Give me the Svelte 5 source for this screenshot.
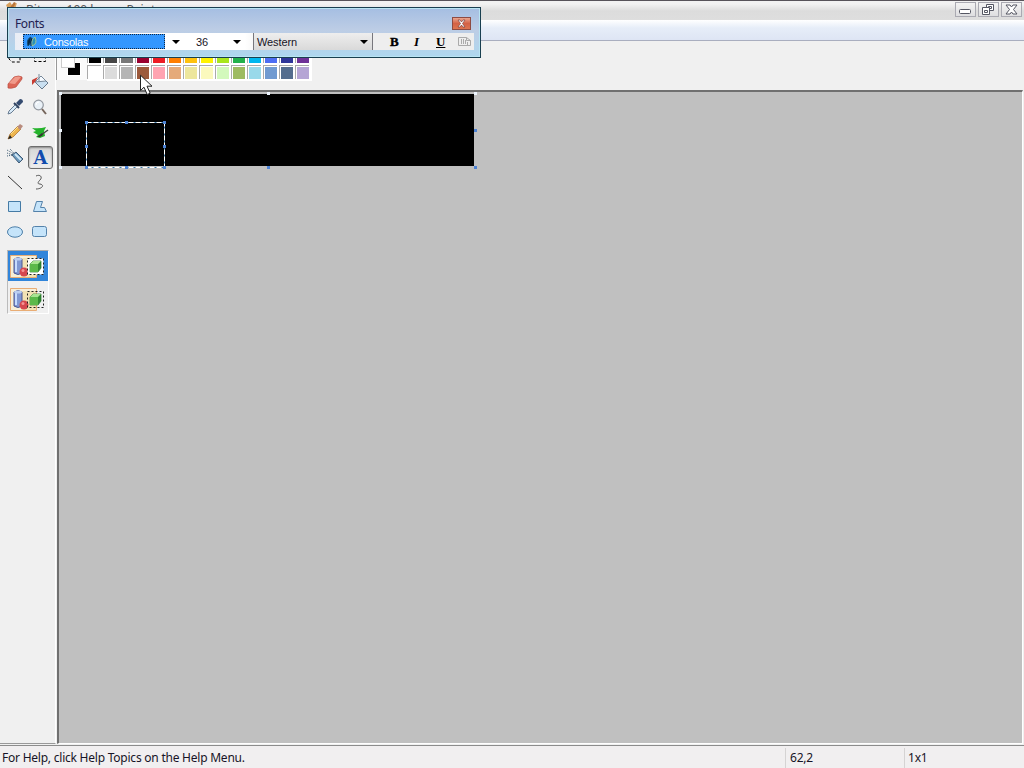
<script>
  const colors = [
    ["#000000", "#464646", "#787878", "#990030", "#ed1c24", "#ff7e00", "#ffc20e", "#fff200", "#a8e61d", "#22b14c", "#00b7ef", "#4d6df3", "#2f3699", "#6f3198"],
    ["#ffffff", "#dcdcdc", "#b4b4b4", "#9c5a3c", "#ffa3b1", "#e5aa7a", "#ede69c", "#fbf9bd", "#d3f9bc", "#9dbb61", "#99d9ea", "#709ad1", "#546d8e", "#b5a5d5"],
  ];

  const tools = [
    "freeSelect",
    "select",
    "eraser",
    "fill",
    "picker",
    "magnifier",
    "pencil",
    "brush",
    "airbrush",
    "text",
    "line",
    "curve",
    "rectangle",
    "polygon",
    "ellipse",
    "rounded",
  ];

  const canvasHandles = [
    [0, 0],
    [208, 0],
    [415, 0],
    [0, 37],
    [415, 37],
    [0, 74],
    [208, 74],
    [415, 74],
  ];
  const textHandles = [
    [0, 0],
    [40, 0],
    [78, 0],
    [0, 24],
    [78, 24],
    [0, 45],
    [40, 45],
    [78, 45],
  ];

  let activeTool = "text";
  let opaque = true;
</script>

<div class="window">
  <header class="titlebar">
    <svg class="app-icon" width="16" height="16" viewBox="0 0 16 16">
      <path d="M2 4l4-3 2 3 5-2-2 6-6 2z" fill="#d9a05d" />
      <path d="M5 8l5-7 2 1-5 8z" fill="#b87539" />
    </svg>
    <span class="title">Bitmap100.bmp - Paint</span>
    <div class="controls">
      <button aria-label="Minimize">
        <svg width="18" height="13" viewBox="0 0 18 13">
          <rect x="3.5" y="6.5" width="11" height="4" rx="1" fill="#fff" stroke="#555763" />
        </svg>
      </button>
      <button aria-label="Restore">
        <svg width="18" height="13" viewBox="0 0 18 13" fill="#fff" stroke="#555763">
          <path d="M7.5 1.5h7v6h-7z" />
          <path d="M9.5 3.5h3v2h-3z" />
          <path d="M3.5 4.5h7v7h-7z" />
          <path d="M5.5 7.5h3v2h-3z" />
        </svg>
      </button>
      <button aria-label="Close">
        <svg width="18" height="13" viewBox="0 0 18 13">
          <path d="M4 2h4l1.5 2L11 2h4l-3.500 4.500L15 11h-4L9.500 9 8 11H4l3.500-4.500z" fill="#fff" stroke="#555763" />
        </svg>
      </button>
    </div>
  </header>
  <nav class="menubar"></nav>

  <div class="main">
    <aside class="toolbox">
      <div class="tools">
        {#each tools as tool}
          <button class="tool" class:active={tool === activeTool} aria-label={tool}>
            {#if tool === "text"}
              <span class="letter">A</span>
            {:else}
              <svg width="18" height="18" viewBox="0 0 18 18" fill="none">
                {#if tool === "freeSelect"}
                  <path d="M3 5v6l3 3h8V5" stroke="#000" stroke-dasharray="3 2" />
                {:else if tool === "select"}
                  <path d="M3.500 3.500h11v10h-11z" stroke="#000" stroke-dasharray="3 2" />
                {:else if tool === "eraser"}
                  <path d="M2 11l6-7q5-2 8 0v2l-6 8q-5 2-8 1z" fill="#dc6656" stroke="#b74c40" stroke-width=".7" />
                  <path d="M3 10l6-6q4-1 6 0l-6 7q-3 0-6-1z" fill="#f09a8a" />
                {:else if tool === "fill"}
                  <path d="M4 9l6-6 7 7-6 6z" fill="#c9dff0" stroke="#66798b" />
                  <path d="M8 1v7M4 9l6-6 5 5z" fill="#f5faff" stroke="#78899a" />
                  <path d="M1 12V7l6-3-3 5z" fill="#c83d32" />
                {:else if tool === "picker"}
                  <path d="M10 5l4-4q3 0 3 3l-4 4z" fill="#344b70" />
                  <path d="M8 5l5 5" stroke="#2d405f" stroke-width="2" />
                  <path d="M9 7l2 2-6 6-3 1 1-3z" fill="#d8eaf8" stroke="#697d92" />
                {:else if tool === "magnifier"}
                  <circle cx="7.500" cy="7" r="4.800" fill="#eaf1f7" stroke="#9298a0" stroke-width="1.200" />
                  <path d="M11 11l4 5" stroke="#75655b" stroke-width="2" />
                  <path d="M5 7q0-3 3-3" stroke="#fff" />
                {:else if tool === "pencil"}
                  <path d="M2 16l2-5 8-8 3 3-8 8z" fill="#edb54e" stroke="#a96c27" stroke-width=".7" />
                  <path d="M11 4l3-3 3 2-3 4z" fill="#b98c7e" />
                  <path d="M2 16l2-4 2 3z" fill="#252525" />
                  <path d="M5 11l7-7" stroke="#ffe28b" />
                {:else if tool === "brush"}
                  <path d="M1 5q8 1 14-1l-2 4 1 5-5 2-4-1 2-2-5-3 3-1z" fill="#24b32b" />
                  <path d="M10 12l7-5" stroke="#464a45" stroke-width="1.500" />
                  <path d="M6 14l5-4 1 2-3 2z" fill="#343a30" />
                {:else if tool === "airbrush"}
                  <path d="M6 7l4-3 7 7-4 4z" fill="#6c9abe" stroke="#415b76" />
                  <path d="M9 6l6 6" stroke="#d1e7f5" stroke-width="2" />
                  <path d="M1 2l7 4M1 5l6 2M1 8l6-1M4 1l4 4" stroke="#405d74" stroke-dasharray="1 1" />
                {:else if tool === "line"}
                  <path d="M2 3l14 13" stroke="#353535" />
                {:else if tool === "curve"}
                  <path d="M5 3c4-2 7 1 4 4-2 2-3 4 0 4 5 1 2 5-4 5" stroke="#555" />
                {:else if tool === "rectangle"}
                  <path d="M2.500 3.500h12v10h-12z" fill="#c5e4fa" stroke="#457ba5" />
                {:else if tool === "polygon"}
                  <path d="M2.500 13.500l3-10h6l-2 6h4l2 4z" fill="#c5e4fa" stroke="#5482aa" />
                {:else if tool === "ellipse"}
                  <ellipse cx="9" cy="9" rx="7.500" ry="5.200" fill="#c5e4fa" stroke="#4d7fa8" />
                {:else}
                  <rect x="1.500" y="3.500" width="14" height="10" rx="2" fill="#c5e4fa" stroke="#5482aa" />
                {/if}
              </svg>
            {/if}
          </button>
        {/each}
      </div>
      <div class="modes">
        {#each [true, false] as mode}
          <button class="mode" class:chosen={opaque === mode} aria-label={mode ? "Opaque" : "Transparent"}>
            <svg width="36" height="26" viewBox="0 0 36 26">
              <path d="M1.500 1.500h26v22h-26z" fill="#f7efd8" stroke="#e9ad75" />
              <path d="M12 4h15v19H12z" fill="#f1e2b4" />
              <path d="M5 5q4-3 8 0v14q-4 3-8 0z" fill="#8098d3" stroke="#4c5792" />
              <path d="M7 6v12" stroke="#c7dcff" stroke-width="2" />
              <ellipse cx="9" cy="5" rx="4" ry="1.500" fill="#b9cdf1" />
              <circle cx="15" cy="18" r="4.500" fill="#d5474f" />
              <circle cx="14" cy="16.500" r="1.500" fill="#f49395" />
              <path d="M18.500 4.500h16v16h-16z" fill={mode ? "#fff" : "none"} stroke="#222" stroke-dasharray="2 2" />
              <path d="M21 10l3-3h8v7l-3 4h-8z" fill="#328b32" stroke="#247029" stroke-width=".7" />
              <path d="M21 10l3-3h8l-3 3z" fill="#a8e491" />
              <path d="M21 10h8v8h-8z" fill="#5bb94a" />
            </svg>
          </button>
        {/each}
      </div>
    </aside>

    <div class="workspace">
      <div class="colorbar">
        <div class="current">
          <span class="background-color"></span>
          <span class="foreground-color"></span>
        </div>
        <div class="palette">
          {#each colors as row}
            {#each row as color}
              <span class="swatch" style="background-color: {color}"></span>
            {/each}
          {/each}
        </div>
      </div>
      <div class="viewport">
        <div class="bitmap"></div>
        {#each canvasHandles as [x, y], i}
          <i class="handle" class:pale={i < 4 || i === 5} style="left: {x}px; top: {y}px"></i>
        {/each}
        <div class="text-selection">
          <svg width="80" height="47" viewBox="0 0 80 47" fill="none">
            <path d="M.500 .500h78v45H.500z" stroke="#3977a6" />
            <path d="M.500 .500h78v45H.500z" stroke="#fff" stroke-dasharray="5 2" />
          </svg>
          {#each textHandles as [x, y]}
            <i class="handle" style="left: {x - 1}px; top: {y - 1}px"></i>
          {/each}
        </div>
      </div>
    </div>
  </div>

  <footer class="statusbar">
    <span class="help">For Help, click Help Topics on the Help Menu.</span>
    <span class="position">62,2</span>
    <span class="size">1x1</span>
  </footer>

  <section class="fonts">
    <div class="fonts-title">
      <span>Fonts</span>
      <button class="fonts-close" aria-label="Close fonts">
        <svg width="9" height="9" viewBox="0 0 9 9">
          <path d="M1 1h2l1.500 2L6 1h2L5.500 4.500 8 8H6L4.500 6 3 8H1l2.500-3.500z" fill="#fff" stroke="#633" stroke-width=".6" />
        </svg>
      </button>
    </div>
    <div class="fonts-row">
      <div class="family">
        <svg width="12" height="12" viewBox="0 0 12 12" fill="none">
          <path d="M5 1Q0 3 2 10Q5 8 5 1z" fill="#082743" stroke="#164d70" />
          <path d="M9 1Q5 3 6 10Q12 8 9 1z" fill="#288fb9" stroke="#a7c98d" />
          <path d="M6 2Q4 6 5 10" stroke="#08223c" />
        </svg>
        <span>Consolas</span>
      </div>
      <span class="arrow family-arrow"></span>
      <span class="font-size">36</span>
      <span class="arrow size-arrow"></span>
      <div class="charset">
        <span>Western</span>
        <span class="arrow"></span>
      </div>
      <div class="format">
        <b>B</b>
        <em>I</em>
        <u>U</u>
        <svg width="14" height="12" viewBox="0 0 14 12" fill="none" stroke="#aaa">
          <path d="M.500 1.500h8l4 3v5H.500zM8.500 1.500v3h4M3.500 3v5M5.500 3v5M7.500 4v4M9.500 6v3" />
        </svg>
      </div>
    </div>
  </section>

  <svg class="cursor" width="13" height="22" viewBox="0 0 13 22">
    <path d="M.500 1.200v15.300l3.500-3.300 3.200 7.300 3-1.300-3.200-7h5z" fill="#fff" stroke="#222" />
  </svg>
</div>

<style>
  :global(body) {
    margin: 0;
  }
  .window {
    position: relative;
    width: 1024px;
    height: 768px;
    overflow: hidden;
    display: flex;
    flex-direction: column;
    background: #f0f0f0;
    color: #171426;
    font-family: "Noto Sans", sans-serif;
    font-size: 12px;
  }
  button {
    box-sizing: border-box;
    margin: 0;
    padding: 0;
    border: 0;
    background: none;
  }
  svg {
    display: block;
    flex: none;
  }
  .titlebar {
    height: 20px;
    flex: none;
    box-sizing: border-box;
    border-top: 1px solid #57535a;
    display: flex;
    background: linear-gradient(#f2f2f2 0 3px, #dcdcdc 10px, #dedede);
  }
  .app-icon {
    margin-left: 4px;
  }
  .title {
    height: 7px;
    overflow: hidden;
    margin-left: 6px;
    line-height: 17px;
    color: #555;
  }
  .controls {
    display: flex;
    gap: 2px;
    margin: 1px 2px 0 auto;
  }
  .controls button {
    width: 21px;
    height: 15px;
    border: 1px solid #aaaab2;
    background: linear-gradient(#f3f3f3, #dedee0);
  }
  .menubar {
    height: 21px;
    flex: none;
    box-sizing: border-box;
    border-bottom: 1px solid #a9aebf;
    background: linear-gradient(#fff, #e6edf8 8px, #dee5f4);
  }
  .main {
    height: 703px;
    flex: none;
    display: flex;
  }
  .toolbox {
    width: 56px;
    box-sizing: border-box;
    padding: 3px 3px 0 2px;
    border-right: 1px solid #fff;
    border-bottom: 1px solid #999;
  }
  .tools {
    display: grid;
    grid-template-columns: 25px 25px;
    grid-auto-rows: 25px;
  }
  .tool {
    display: flex;
    align-items: center;
    justify-content: center;
  }
  .tool.active {
    height: 23px;
    margin: 2px -1px 0 1px;
    border: 1px solid #6d6d6d;
    border-radius: 3px;
    background: linear-gradient(#d6d6d6, #eee);
    box-shadow: inset 0 1px 2px #888;
  }
  .letter {
    color: #124cae;
    font: bold 18px/21px "DejaVu Serif", serif;
  }
  .modes {
    width: 40px;
    height: 62px;
    margin: 6px 0 0 5px;
    display: flex;
    flex-direction: column;
    gap: 3px;
    border-top: 1px solid #aaa;
    border-left: 1px solid #bbb;
    border-right: 1px solid #fff;
    border-bottom: 1px solid #fff;
  }
  .mode {
    flex: none;
    width: 40px;
    height: 30px;
    padding: 3px 1px 1px;
  }
  .chosen {
    background: #3185da;
  }
  .workspace {
    flex: 1;
    display: flex;
    flex-direction: column;
    margin-right: 1px;
  }
  .colorbar {
    height: 49px;
    flex: none;
    display: flex;
    align-items: flex-start;
  }
  .current {
    width: 31px;
    height: 39px;
    box-sizing: border-box;
    position: relative;
    border-left: 1px solid #999;
    background: #fafafa;
  }
  .background-color,
  .foreground-color {
    position: absolute;
    width: 12px;
    height: 12px;
  }
  .background-color {
    left: 10px;
    top: 21px;
    background: #000;
    border: 1px solid #fff;
  }
  .foreground-color {
    left: 4px;
    top: 13px;
    background: #fff;
    border: 1px solid #ccc;
  }
  .palette {
    padding: 9px 0 0 1px;
    height: 31px;
    display: grid;
    grid-template-columns: repeat(14, 16px);
    grid-template-rows: 16px 16px;
    background: #fff;
  }
  .swatch {
    width: 12px;
    height: 12px;
    margin: 1px;
    outline: 1px solid #fff;
    box-shadow: -1px -1px 0 1px #aaa;
  }
  .viewport {
    position: relative;
    flex: 1;
    box-sizing: border-box;
    margin-left: 1px;
    padding: 2px 0 0 2px;
    border: 1px solid #858585;
    border-top: 2px solid #707070;
    border-left: 2px solid #707070;
    border-right-color: #fff;
    border-bottom-color: #fff;
    background: #c0c0c0;
  }
  .bitmap {
    width: 413px;
    height: 72px;
    background: #000;
  }
  .handle {
    position: absolute;
    width: 3px;
    height: 3px;
    background: #4d83d5;
  }
  .handle.pale {
    background: #eef6ff;
  }
  .text-selection {
    position: absolute;
    left: 27px;
    top: 30px;
    width: 80px;
    height: 47px;
  }
  .statusbar {
    flex: 1;
    box-sizing: border-box;
    margin-top: 1px;
    border-top: 1px solid #8c8c8c;
    padding-top: 2px;
    display: flex;
    line-height: 20px;
    letter-spacing: -0.23px;
    background: #f1eff0;
  }
  .help {
    width: 783px;
    padding-left: 2px;
  }
  .position,
  .size {
    box-sizing: border-box;
    width: 119px;
    padding-left: 4px;
    border-left: 1px solid #d5d3d3;
  }
  .size {
    padding-left: 3px;
  }
  .fonts {
    position: absolute;
    left: 7px;
    top: 7px;
    width: 474px;
    height: 51px;
    box-sizing: border-box;
    padding: 7px 6px 6px 7px;
    border: 1px solid #193f50;
    background: linear-gradient(#a5bee2, #bdcde5 22px, #aed7ef);
    box-shadow: inset 0 0 0 1px #b9e4f3;
  }
  .fonts-title {
    height: 18px;
    display: flex;
    justify-content: space-between;
    line-height: 17px;
    letter-spacing: -0.4px;
    color: #231d51;
  }
  .fonts-close {
    width: 19px;
    height: 13px;
    margin: 2px 3px 0 0;
    display: flex;
    align-items: center;
    justify-content: center;
    border: 1px solid #8e4b42;
    background: linear-gradient(#eba58e, #d36246 50%, #dd7551);
  }
  .fonts-row {
    height: 17px;
    display: flex;
    align-items: center;
    background: linear-gradient(90deg, #e9edf5, #fff 80px, #fff 230px, #eee 250px);
    font: 11px "Liberation Sans", sans-serif;
  }
  .family {
    width: 142px;
    height: 15px;
    box-sizing: border-box;
    margin-left: 8px;
    padding-left: 2px;
    display: flex;
    align-items: center;
    gap: 6px;
    border: 1px dotted #102845;
    background: #3397ff;
    color: #fff;
    letter-spacing: -0.2px;
  }
  .arrow {
    border: 4px solid transparent;
    border-top-color: #000;
    border-bottom: 0;
  }
  .family-arrow {
    margin-left: 7px;
  }
  .font-size {
    width: 38px;
    margin-left: 16px;
  }
  .size-arrow {
    margin: 0 12px 0 -1px;
  }
  .charset {
    width: 120px;
    height: 17px;
    box-sizing: border-box;
    display: flex;
    align-items: center;
    justify-content: space-between;
    padding: 0 4px 0 3px;
    border: solid #77777d;
    border-width: 0 1px;
    background: linear-gradient(#eee, #d9d9d9);
    letter-spacing: -0.1px;
  }
  .format {
    display: flex;
    align-items: center;
    margin-left: 17px;
    color: #000;
    font: bold 13px/17px "Liberation Serif", serif;
  }
  .format b {
    width: 24px;
    -webkit-text-stroke: 0.4px #000;
  }
  .format em {
    width: 22px;
  }
  .format u {
    width: 22px;
  }
  .cursor {
    position: absolute;
    left: 140px;
    top: 74px;
  }
</style>
